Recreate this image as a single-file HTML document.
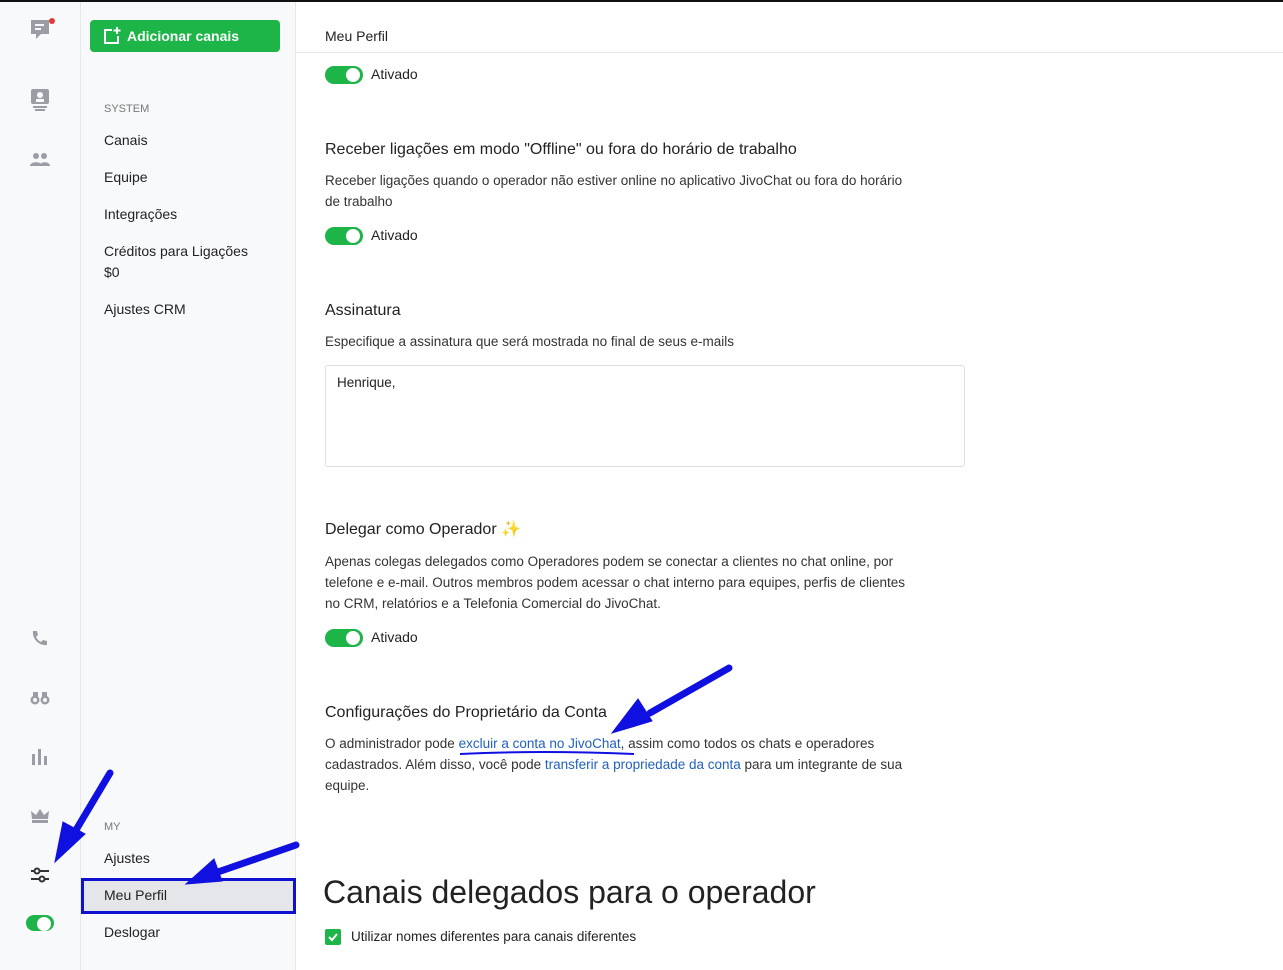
<!DOCTYPE html>
<html><head><meta charset="utf-8"><style>
*{box-sizing:border-box;margin:0;padding:0}
body{width:1283px;height:970px;overflow:hidden;background:#fff;font-family:"Liberation Sans",sans-serif;color:#222;position:relative}
.rail{position:absolute;left:0;top:2px;width:81px;height:968px;background:#f8f9fb;border-right:1px solid #e6e8eb}
.side{position:absolute;left:81px;top:2px;width:215px;height:968px;background:#f8f9fb;border-right:1px solid #e6e8eb}
.btn{position:absolute;left:9px;top:18px;width:190px;height:32px;background:#1db448;border-radius:4px;color:#fff;font-weight:bold;font-size:14px;line-height:32px;padding-left:37px}
.cap{position:absolute;left:23px;font-size:11px;color:#777}
.it{position:absolute;left:23px;font-size:14px;color:#222}
.t{position:absolute;font-size:14px;color:#222;white-space:nowrap}
.h{position:absolute;font-size:16px;color:#222;white-space:nowrap}
.p{position:absolute;font-size:13.5px;line-height:21px;color:#333;width:597px}
.tog{position:absolute;width:38px;height:18px;border-radius:9px;background:#1db448}
.tog:after{content:"";position:absolute;right:3px;top:2px;width:14px;height:14px;border-radius:50%;background:#fff}
a{color:#2160c4;text-decoration:none}
.ic{position:absolute;left:30px;fill:#9a9ea4}
</style></head><body>
<div style="position:absolute;left:0;top:0;width:1283px;height:2px;background:#111"></div>
<div class="rail">
<svg class="ic" style="top:16px" width="26" height="26" viewBox="0 0 26 26"><path d="M1 2h18v14h-8l-5 5v-5H1z" fill="#9a9ea4"/><rect x="5" y="6" width="9" height="2" fill="#f8f9fb"/><rect x="5" y="10" width="6" height="2" fill="#f8f9fb"/><circle cx="22" cy="3" r="3" fill="#e53935"/></svg>
<svg class="ic" style="top:86px" width="22" height="24"><rect x="1" y="1" width="18" height="15" rx="2"/><circle cx="10" cy="7" r="3" fill="#f8f9fb"/><rect x="6" y="11" width="8" height="3" fill="#f8f9fb"/><rect x="3" y="18" width="14" height="2"/><rect x="5" y="21" width="10" height="2"/></svg>
<svg class="ic" style="top:150px" width="20" height="16"><circle cx="6" cy="4" r="3"/><circle cx="14" cy="4" r="3"/><path d="M0 14c0-5 12-5 12 0zM9 14c1-5 11-5 11 0z"/></svg>
<svg class="ic" style="top:628px" width="18" height="18"><path d="M3 1l4 0 1 4-2 2c1 2 3 4 5 5l2-2 4 1v4c-8 1-15-6-14-14z"/></svg>
<svg class="ic" style="top:688px" width="20" height="16"><circle cx="5" cy="10" r="4.5"/><circle cx="15" cy="10" r="4.5"/><rect x="3" y="2" width="5" height="6"/><rect x="12" y="2" width="5" height="6"/><circle cx="5" cy="10" r="2" fill="#f8f9fb"/><circle cx="15" cy="10" r="2" fill="#f8f9fb"/></svg>
<svg class="ic" style="top:746px" width="18" height="18"><rect x="2" y="6" width="3" height="11"/><rect x="8" y="1" width="3" height="16"/><rect x="14" y="8" width="3" height="9"/></svg>
<svg class="ic" style="top:806px" width="20" height="16"><path d="M1 3l5 4 4-6 4 6 5-4-1 8H2z"/><rect x="2" y="12" width="16" height="3"/></svg>
<svg style="position:absolute;left:30px;top:864px" width="20" height="18" fill="none" stroke="#333" stroke-width="2"><line x1="1" y1="5" x2="19" y2="5"/><line x1="1" y1="13" x2="19" y2="13"/><circle cx="7" cy="5" r="2.5" fill="#f8f9fb"/><circle cx="12" cy="13" r="2.5" fill="#f8f9fb"/></svg>
<div class="tog" style="left:26px;top:913px;width:28px;height:16px"></div>
</div>
<div class="side">
<div class="btn"><svg style="position:absolute;left:13px;top:7px" width="18" height="18" fill="none" stroke="#fff" stroke-width="2"><path d="M9 3H2v13h13V9"/><path d="M14 0v7M10.5 3.5h7"/></svg>Adicionar canais</div>
<div class="cap" style="top:101px">SYSTEM</div>
<div class="it" style="top:130px">Canais</div>
<div class="it" style="top:167px">Equipe</div>
<div class="it" style="top:204px">Integrações</div>
<div class="it" style="top:241px">Créditos para Ligações</div>
<div class="it" style="top:262px">$0</div>
<div class="it" style="top:299px">Ajustes CRM</div>
<div class="cap" style="top:819px">MY</div>
<div class="it" style="top:848px">Ajustes</div>
<div style="position:absolute;left:0;top:876px;width:215px;height:36px;background:#e5e6ea;border:3px solid #1010d0"></div>
<div class="it" style="top:885px">Meu Perfil</div>
<div class="it" style="top:922px">Deslogar</div>
</div>
<div style="position:absolute;left:296px;top:52px;width:987px;height:1px;background:#e6e8eb"></div>
<div class="t" style="left:325px;top:28px">Meu Perfil</div>
<div class="tog" style="left:325px;top:66px"></div><div class="t" style="left:371px;top:66px">Ativado</div>
<div class="h" style="left:325px;top:141px">Receber ligações em modo "Offline" ou fora do horário de trabalho</div>
<div class="p" style="left:325px;top:170px;width:590px">Receber ligações quando o operador não estiver online no aplicativo JivoChat ou fora do horário de trabalho</div>
<div class="tog" style="left:325px;top:227px"></div><div class="t" style="left:371px;top:227px">Ativado</div>
<div class="h" style="left:325px;top:302px">Assinatura</div>
<div class="p" style="left:325px;top:331px;width:700px">Especifique a assinatura que será mostrada no final de seus e-mails</div>
<div style="position:absolute;left:325px;top:365px;width:640px;height:102px;border:1px solid #dcdfe3;border-radius:3px;padding:9px 11px;font-size:13.5px">Henrique,</div>
<div class="h" style="left:325px;top:519px">Delegar como Operador <span style="color:#f5b82e">✨</span></div>
<div class="p" style="left:325px;top:551px">Apenas colegas delegados como Operadores podem se conectar a clientes no chat online, por telefone e e-mail. Outros membros podem acessar o chat interno para equipes, perfis de clientes no CRM, relatórios e a Telefonia Comercial do JivoChat.</div>
<div class="tog" style="left:325px;top:629px"></div><div class="t" style="left:371px;top:629px">Ativado</div>
<div class="h" style="left:325px;top:704px">Configurações do Proprietário da Conta</div>
<div class="p" style="left:325px;top:733px">O administrador pode <a>excluir a conta no JivoChat</a>, assim como todos os chats e operadores cadastrados. Além disso, você pode <a>transferir a propriedade da conta</a> para um integrante de sua equipe.</div>
<div style="position:absolute;left:323px;top:874px;font-size:32px;color:#222;white-space:nowrap">Canais delegados para o operador</div>
<div style="position:absolute;left:325px;top:929px;width:16px;height:16px;background:#1db448;border-radius:2px"><svg width="16" height="16" fill="none" stroke="#fff" stroke-width="2"><path d="M4 8l3 3 5-6"/></svg></div>
<div class="t" style="left:351px;top:929px;font-size:13.5px">Utilizar nomes diferentes para canais diferentes</div>
<svg style="position:absolute;left:0;top:0" width="1283" height="970" fill="#1010e0" stroke="#1010e0">
<line x1="110" y1="773" x2="70" y2="840" stroke-width="7" stroke-linecap="round"/><path d="M55 862l8-40 22 12z"/>
<line x1="296" y1="845" x2="215" y2="873" stroke-width="7" stroke-linecap="round"/><path d="M186 884l28-25 8 22z"/>
<line x1="729" y1="668" x2="650" y2="713" stroke-width="7" stroke-linecap="round"/><path d="M612 733l26-34 14 22z"/>
<path d="M460 754q80 -4 174 0" fill="none" stroke-width="2"/>
</svg>
</body></html>
